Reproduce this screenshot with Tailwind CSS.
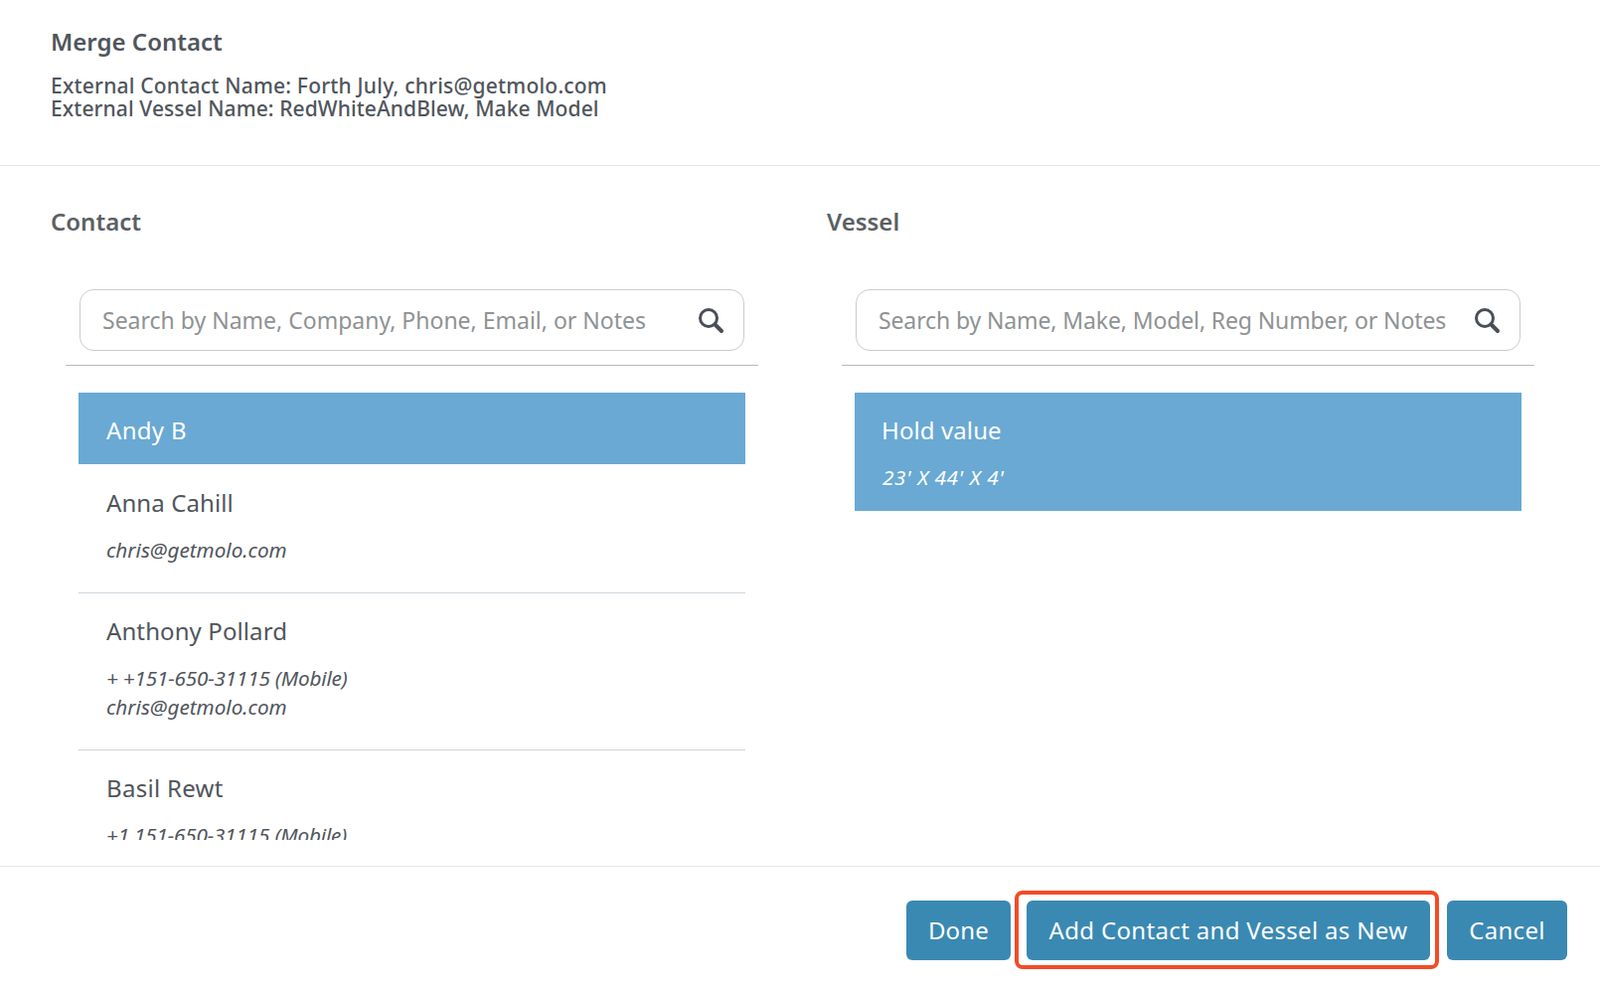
<!DOCTYPE html>
<html lang="en">
<head>
    <meta charset="UTF-8">
    <title>Merge Contact</title>
    <script src="https://cdn.jsdelivr.net/npm/@tailwindcss/browser@4"></script>
</head>
<body class="bg-white font-['Noto_Sans',sans-serif] text-[#50555c]">
    <div class="w-[1610px] h-[996px] overflow-hidden flex flex-col">

        <!-- Header -->
        <div class="h-[167px] shrink-0 border-b border-[#e6e6e6] pl-[51px] pt-[26px]">
            <h2 class="text-[24px] leading-[32px] font-semibold">Merge Contact</h2>
            <p class="mt-[17px] text-[21px] leading-[23px] font-medium tracking-[0.21px]">External Contact Name: Forth July, chris@getmolo.com<br><span class="tracking-[0.1px]">External Vessel Name: RedWhiteAndBlew, Make Model</span></p>
        </div>

        <!-- Body -->
        <div class="h-[704px] shrink-0 flex pl-[51px]">
            <!-- Contact column -->
            <div class="w-[781px]">
                <h3 class="mt-[40px] text-[24px] leading-[32px] font-semibold text-[#5c5f63]">Contact</h3>
                <div class="mt-[52px] ml-[15px] w-[697px] h-[77px] border-b border-[#b9b9b9] px-[14px]">
                    <div class="h-[62px] border border-[#cccccc] rounded-[14px] flex items-center pl-[22px] pr-[19px]">
                        <input class="flex-1 outline-none text-[23px] placeholder:text-[#8f9294]" placeholder="Search by Name, Company, Phone, Email, or Notes">
                        <svg class="w-[28px] h-[28px]" viewBox="0 0 28 28" fill="none" stroke="#4a4f57"><circle cx="12" cy="12" r="8.5" stroke-width="3"/><path d="M18.5 18.5L25 25" stroke-width="4" stroke-linecap="round"/></svg>
                    </div>
                </div>
                <div class="mt-[27px] ml-[28px] w-[671px] h-[450px] overflow-hidden">
                    <div class="h-[72px] bg-[#69a9d3] text-white px-[28px] pt-[20px] text-[24px] leading-[36px] tracking-[0.3px]">Andy B</div>
                    <div class="h-[130px] border-b border-[#cdd5db] px-[28px] pt-[21px]">
                        <div class="text-[24px] leading-[36px] tracking-[0.1px]">Anna Cahill</div>
                        <div class="mt-[15px] text-[20.7px] leading-[29px] italic">chris@getmolo.com</div>
                    </div>
                    <div class="h-[158px] border-b border-[#cdd5db] px-[28px] pt-[20px]">
                        <div class="text-[24px] leading-[36px] tracking-[0.1px]">Anthony Pollard</div>
                        <div class="mt-[15px] text-[20.7px] leading-[29px] italic"><span class="tracking-[-0.17px]">+ +151-650-31115 (Mobile)</span><br>chris@getmolo.com</div>
                    </div>
                    <div class="px-[28px] pt-[20px]">
                        <div class="text-[24px] leading-[36px] tracking-[0.3px]">Basil Rewt</div>
                        <div class="mt-[15px] text-[20.7px] leading-[29px] italic tracking-[-0.17px]">+1 151-650-31115 (Mobile)</div>
                    </div>
                </div>
            </div>
            <!-- Vessel column -->
            <div class="w-[778px]">
                <h3 class="mt-[40px] text-[24px] leading-[32px] font-semibold text-[#5c5f63]">Vessel</h3>
                <div class="mt-[52px] ml-[15px] w-[697px] h-[77px] border-b border-[#b9b9b9] px-[14px]">
                    <div class="h-[62px] border border-[#cccccc] rounded-[14px] flex items-center pl-[22px] pr-[19px]">
                        <input class="flex-1 outline-none text-[23px] tracking-[-0.12px] placeholder:text-[#8f9294]" placeholder="Search by Name, Make, Model, Reg Number, or Notes">
                        <svg class="w-[28px] h-[28px]" viewBox="0 0 28 28" fill="none" stroke="#4a4f57"><circle cx="12" cy="12" r="8.5" stroke-width="3"/><path d="M18.5 18.5L25 25" stroke-width="4" stroke-linecap="round"/></svg>
                    </div>
                </div>
                <div class="mt-[27px] ml-[28px] w-[671px] h-[119px] bg-[#69a9d3] text-white px-[27px] pt-[20px]">
                    <div class="text-[24px] leading-[36px] tracking-[0.1px]">Hold value</div>
                    <div class="mt-[15px] ml-[1px] text-[20.7px] leading-[29px] italic tracking-[0.6px]">23' X 44' X 4'</div>
                </div>
            </div>
        </div>

        <!-- Footer -->
        <div class="flex-1 border-t border-[#e6e6e6] flex justify-end items-start pr-[33px] pt-[34px]">
            <button class="h-[60px] w-[105px] rounded-[6px] bg-[#3a89b3] text-white text-[24px] tracking-[0.2px]">Done</button>
            <div class="relative ml-[16px] w-[406px]">
                <button class="h-[60px] w-full rounded-[6px] bg-[#3a89b3] text-white text-[24px] tracking-[0.33px]">Add Contact and Vessel as New</button>
                <div class="absolute -left-[12px] -right-[9px] -top-[10px] -bottom-[9px] border-[4px] border-[#f44a26] rounded-[8px]"></div>
            </div>
            <button class="ml-[17px] h-[60px] w-[121px] rounded-[6px] bg-[#3a89b3] text-white text-[24px] tracking-[0.33px]">Cancel</button>
        </div>
    </div>
</body>
</html>
